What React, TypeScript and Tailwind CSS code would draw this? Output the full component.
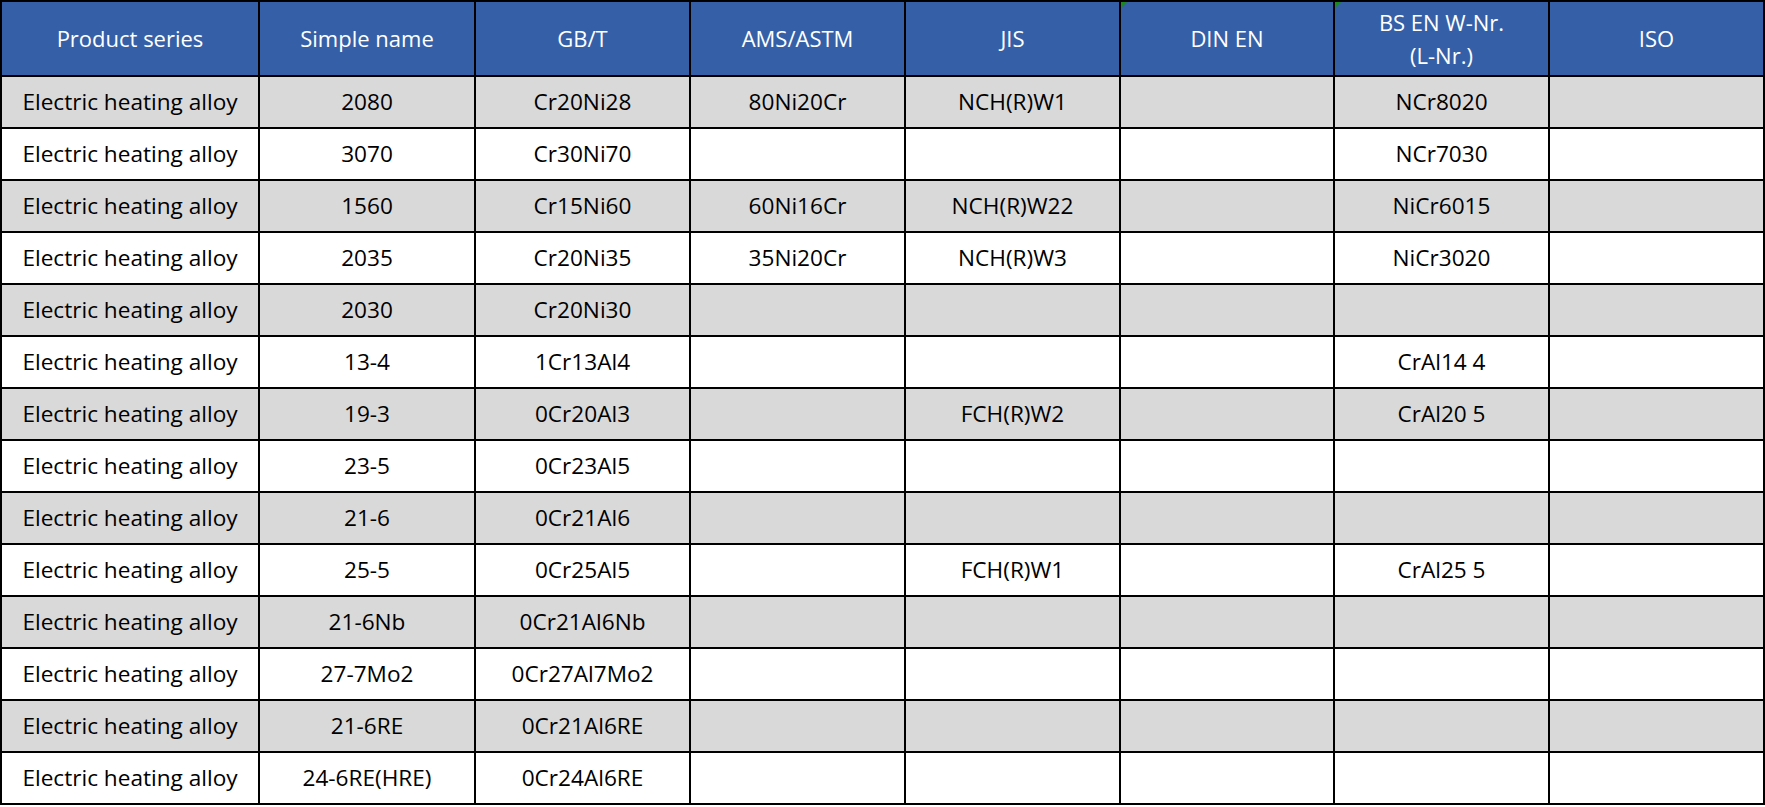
const headers = ['Product series', 'Simple name', 'GB/T', 'AMS/ASTM', 'JIS', 'DIN EN', 'BS EN W-Nr.\n(L-Nr.)', 'ISO'];

const rows: string[][] = [
  ['2080', 'Cr20Ni28', '80Ni20Cr', 'NCH(R)W1', '', 'NCr8020', ''],
  ['3070', 'Cr30Ni70', '', '', '', 'NCr7030', ''],
  ['1560', 'Cr15Ni60', '60Ni16Cr', 'NCH(R)W22', '', 'NiCr6015', ''],
  ['2035', 'Cr20Ni35', '35Ni20Cr', 'NCH(R)W3', '', 'NiCr3020', ''],
  ['2030', 'Cr20Ni30', '', '', '', '', ''],
  ['13-4', '1Cr13Al4', '', '', '', 'CrAl14 4', ''],
  ['19-3', '0Cr20Al3', '', 'FCH(R)W2', '', 'CrAl20 5', ''],
  ['23-5', '0Cr23Al5', '', '', '', '', ''],
  ['21-6', '0Cr21Al6', '', '', '', '', ''],
  ['25-5', '0Cr25Al5', '', 'FCH(R)W1', '', 'CrAl25 5', ''],
  ['21-6Nb', '0Cr21Al6Nb', '', '', '', '', ''],
  ['27-7Mo2', '0Cr27Al7Mo2', '', '', '', '', ''],
  ['21-6RE', '0Cr21Al6RE', '', '', '', '', ''],
  ['24-6RE(HRE)', '0Cr24Al6RE', '', '', '', '', ''],
];

export default function App() {
  return (
    <div className="w-[1765px] h-[807px] bg-white" style={{ fontFamily: '"Open Sans", "Noto Sans", sans-serif' }}>
      <div className="grid grid-cols-[256px_214px_213px_213px_213px_212px_213px_213px] grid-rows-[73px_repeat(14,50px)] gap-[2px] p-[2px] bg-black w-[1765px] text-[22.6px] text-black">
        {headers.map((h, i) => (
          <div key={h} className="relative flex items-center justify-center text-center whitespace-pre-line leading-[33px] text-[22px] bg-[#3560a8] text-white">
            {(i === 5 || i === 6) && (
              <span className="absolute left-0 top-0 w-0 h-0 border-t-[6px] border-r-[6px] border-t-[#1a8a1a] border-r-transparent" />
            )}
            {h}
          </div>
        ))}
        {rows.map((r, ri) => {
          const bg = ri % 2 === 0 ? 'bg-[#d9d9d9]' : 'bg-white';
          return ['Electric heating alloy', ...r].map((c, ci) => (
            <div key={`${ri}-${ci}`} className={`flex items-center justify-center ${bg}`}>
              {c}
            </div>
          ));
        })}
      </div>
    </div>
  );
}
